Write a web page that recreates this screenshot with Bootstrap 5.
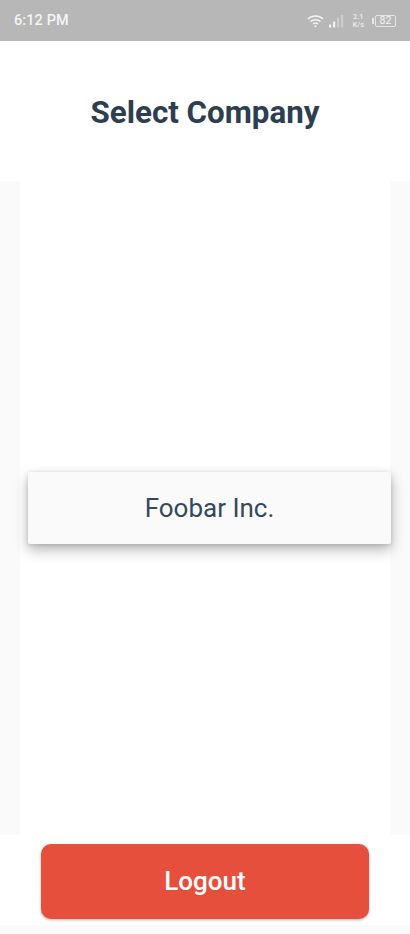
<!DOCTYPE html>
<html lang="en">
<head>
  <meta charset="UTF-8" />
  <meta name="viewport" content="width=device-width, initial-scale=1.0"/>
  <title>Select Company</title>
  <link href="https://cdn.jsdelivr.net/npm/bootstrap@5.3.0/dist/css/bootstrap.min.css" rel="stylesheet">
  <style>
    html, body { height: 100%; }
    body {
      background: #fafafa;
      font-family: Roboto, "Liberation Sans", sans-serif;
      color: #2c3e50;
      overflow: hidden;
    }
    .app-screen { height: 934px; }
    .status-strip {
      height: 41px;
      background: #b7b7b7;
      color: #f4f4f4;
      font-size: 14.5px;
      padding: 0 14px 0 14px;
    }
    .status-time { font-weight: 500; letter-spacing: .1px; }
    .status-icons { gap: 5px; }
    .net-speed { font-size: 7.5px; line-height: 8px; font-weight: 500; text-align: center; margin-left: 3px; color: #ececec; }
    .batt-box {
      width: 21px; height: 12px;
      border: 1px solid #e6e6e6;
      border-radius: 2px;
      font-size: 10.5px; line-height: 10px;
      text-align: center;
      margin-left: 6px;
      position: relative;
      color: #f4f4f4;
    }
    .batt-box::before {
      content: "";
      position: absolute;
      left: -4px; top: 2px;
      width: 2px; height: 6px;
      background: #e6e6e6;
    }
    .title-band { height: 140px; background: #fff; }
    .title-text { font-size: 31.3px; font-weight: 700; color: #2c3e50; margin: 4px 0 0; line-height: 1.2; }
    .list-band { height: 654px; padding: 0 20px; }
    .list-column { background: #fff; height: 100%; padding-left: 8px; }
    .company-tile {
      flex: 0 0 363px;
      height: 72px;
      background: #fafafa;
      border: 0;
      border-radius: 2px;
      font-size: 26px;
      color: #34495e;
      box-shadow: 0 6px 14px rgba(0,0,0,.28), 0 1px 5px rgba(0,0,0,.14);
    }
    .footer-band { height: 90px; background: #fff; padding: 9px 41px 6px; }
    .logout-btn {
      height: 75px;
      background: #e74f3d;
      border: 0;
      border-radius: 10px;
      color: #fff;
      font-size: 26px;
      font-weight: 500;
      box-shadow: 0 1px 3px rgba(0,0,0,.3);
    }
    .logout-btn:hover { background: #e74f3d; color: #fff; }
  </style>
</head>
<body>
  <div class="app-screen d-flex flex-column">
    <div class="status-strip d-flex align-items-center justify-content-between">
      <span class="status-time">6:12 PM</span>
      <div class="status-icons d-flex align-items-center">
        <svg width="17" height="14" viewBox="0 0 17 14" fill="none" stroke="#f2f2f2" stroke-width="1.5">
          <path d="M1 5 C5 1 12 1 16 5"/>
          <path d="M3.5 7.5 C6 5 11 5 13.5 7.5"/>
          <path d="M6 10 C7.5 8.8 9.5 8.8 11 10"/>
          <circle cx="8.5" cy="12.3" r="1.1" fill="#f2f2f2" stroke="none"/>
        </svg>
        <svg width="15" height="14" viewBox="0 0 15 14">
          <rect x="0" y="10.5" width="2.2" height="3" fill="#f2f2f2"/>
          <rect x="4" y="7.5" width="2.2" height="6" fill="#f2f2f2"/>
          <rect x="8" y="4" width="2.2" height="9.5" fill="#cdcdcd"/>
          <rect x="12" y="1" width="2.2" height="12.5" fill="#cdcdcd"/>
        </svg>
        <div class="net-speed">2.1<br>K/s</div>
        <div class="batt-box">82</div>
      </div>
    </div>

    <div class="title-band d-flex align-items-center justify-content-center">
      <h1 class="title-text">Select Company</h1>
    </div>

    <div class="list-band">
      <div class="list-column d-flex align-items-center">
        <button class="company-tile btn d-flex align-items-center justify-content-center">Foobar Inc.</button>
      </div>
    </div>

    <div class="footer-band">
      <button class="logout-btn btn w-100 d-flex align-items-center justify-content-center">Logout</button>
    </div>
  </div>
  <script src="https://cdn.jsdelivr.net/npm/bootstrap@5.3.0/dist/js/bootstrap.bundle.min.js"></script>
</body>
</html>
